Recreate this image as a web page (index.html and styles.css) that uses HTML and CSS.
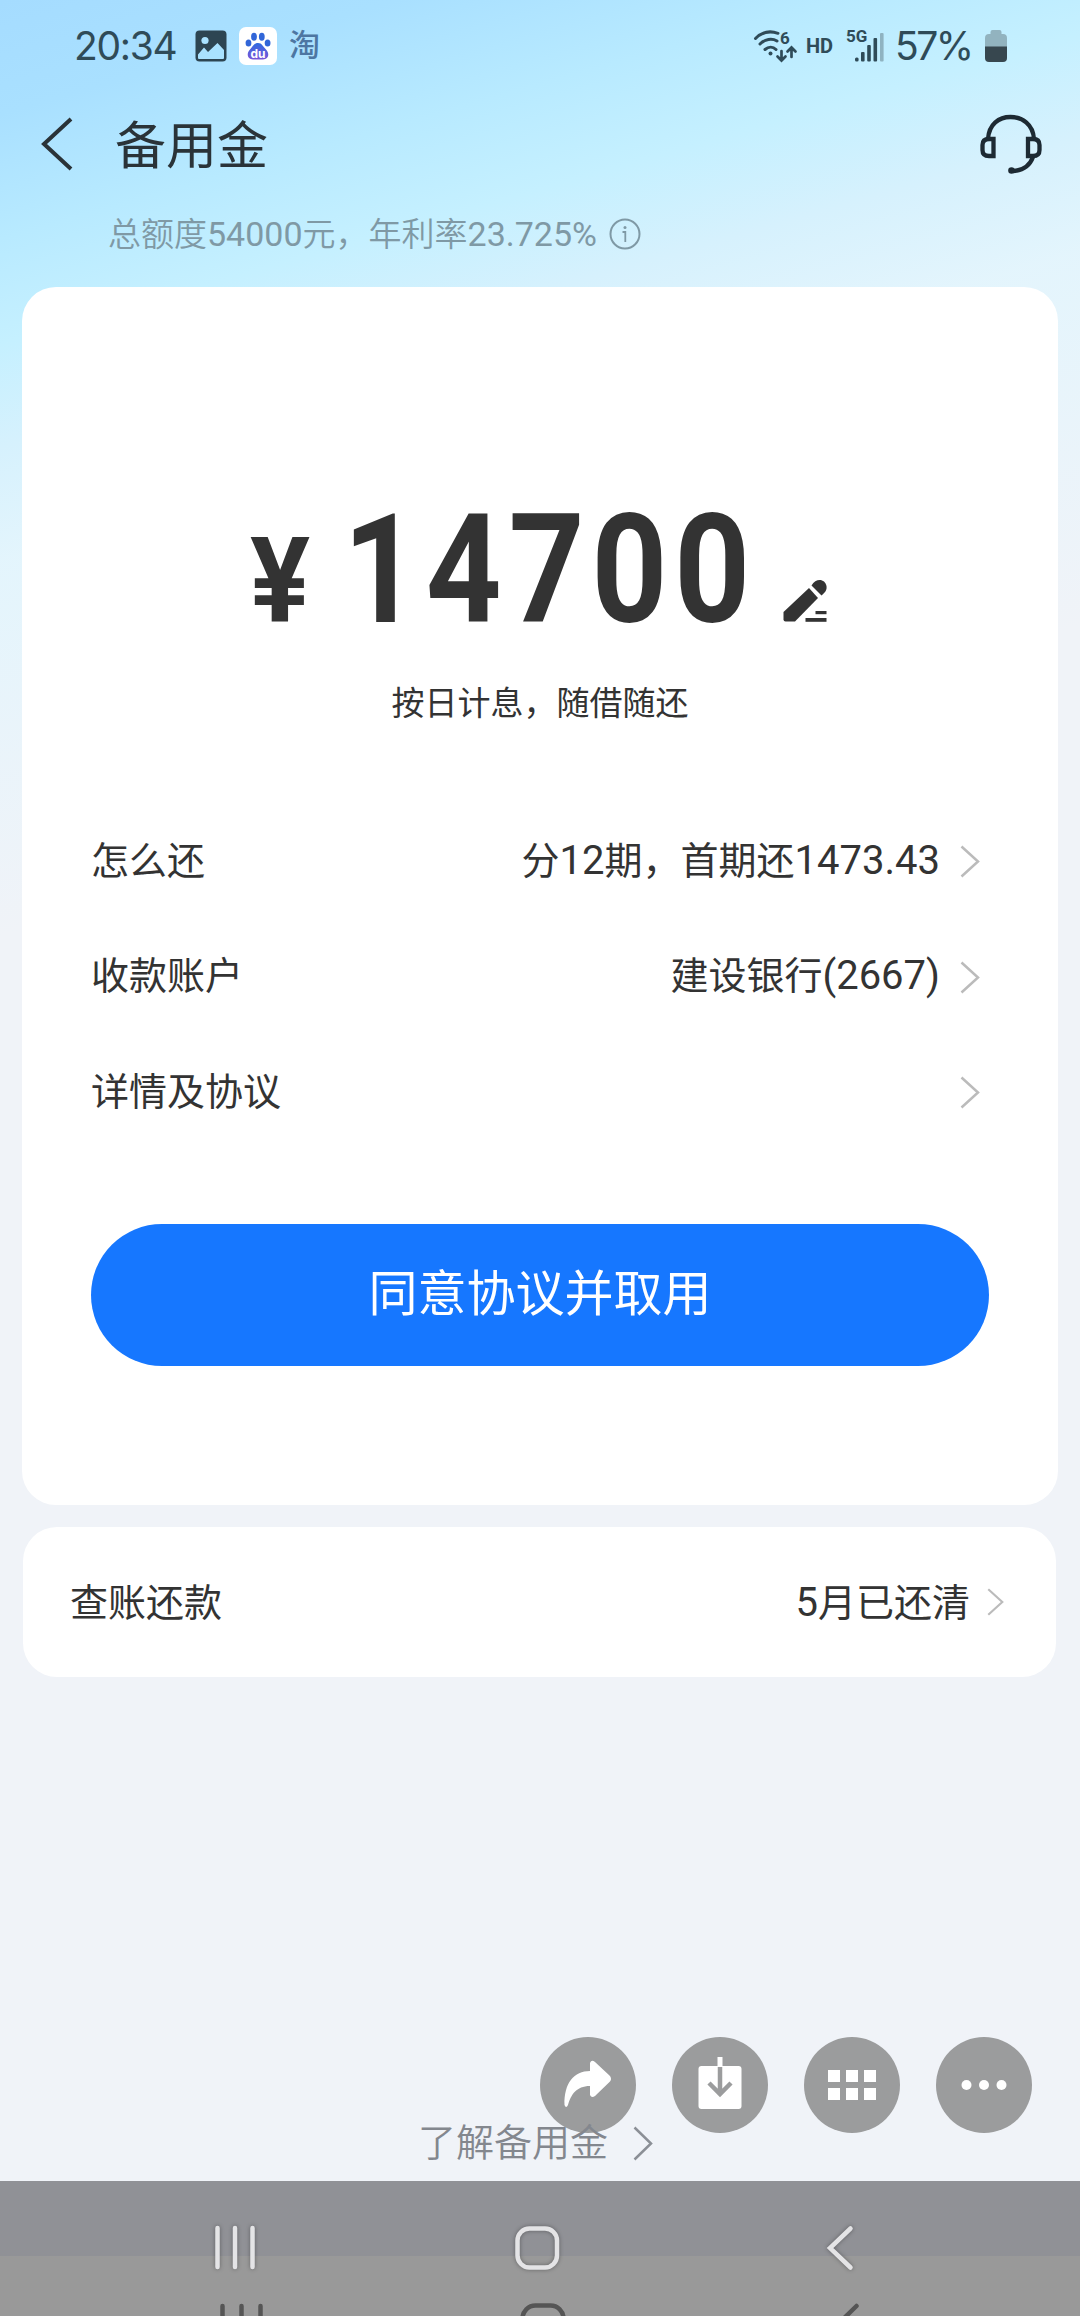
FILE: index.html
```html
<!DOCTYPE html>
<html lang="zh-CN">
<head>
<meta charset="utf-8">
<title>备用金</title>
<link rel="stylesheet" href="styles.css">
</head>
<body>
<div class="screen">
  <header class="status">
    <span class="time">20:34</span>
    <svg class="ic-photo" viewBox="0 0 32 32"><rect x=".5" y=".5" width="31" height="31" rx="4" fill="#2d4552"/><circle cx="10" cy="10.500" r="3.600" fill="#a9e2ff"/><path d="M3 24.500 9 17.500l4 4.500L22.500 13 29 20v8a1 1 0 0 1-1 1H4a1 1 0 0 1-1-1z" fill="#a9e2ff"/></svg>
    <svg class="ic-paw" viewBox="0 0 38 38"><rect width="38" height="38" rx="7" fill="#fff"/><defs><linearGradient id="paw" x1="0" y1="0" x2="0" y2="1"><stop offset="0" stop-color="#2f6be0"/><stop offset="1" stop-color="#7a55d8"/></linearGradient></defs><g fill="#3166d8"><ellipse cx="9.500" cy="16" rx="2.900" ry="3.600"/><ellipse cx="15" cy="9.700" rx="2.900" ry="4"/><ellipse cx="22.800" cy="9.700" rx="2.900" ry="4"/><ellipse cx="28.600" cy="16" rx="2.900" ry="3.600"/></g><path d="M19 16c4 0 5 3.500 8 6.500 4 4 2.500 10-3 10H14c-5.500 0-7-6-3-10 3-3 4-6.500 8-6.500z" fill="url(#paw)"/><text x="19" y="30.500" text-anchor="middle" class="paw-text">du</text></svg>
    <span class="tao">淘</span>
    <span class="spacer"></span>
    <svg class="ic-wifi" viewBox="0 0 42 32"><g fill="none" stroke="#2f4b58" stroke-width="3" stroke-linecap="round"><path d="M1.500 8.500C8 2 16 .5 24 3.300M6 14c5-5 12-6 17-3M11 19.500c3.500-3 8-3 11 0"/><path d="M27.500 21v9m-4-3.500 4 4 4-4M37.500 27v-9m-4 3.500 4-4 4 4" stroke-width="2.700"/></g><circle cx="16.500" cy="23.500" r="2" fill="#2f4b58"/><text x="26" y="13.500" class="wifi-text">6</text></svg>
    <span class="hd">HD</span>
    <svg class="ic-signal" viewBox="0 0 38 34"><text x="0" y="13.300" class="sig-text">5G</text><g fill="#2f4b58"><rect x="9" y="28.500" width="3.600" height="4" rx="1.500"/><rect x="15" y="23" width="3.600" height="9.500" rx="1"/><rect x="21.200" y="16" width="3.600" height="16.500" rx="1"/><rect x="27.500" y="9" width="3.600" height="23.500" rx="1"/><rect x="34" y="4" width="3.600" height="28.500" rx="1" fill="#8fb3c1"/></g></svg>
    <span class="pct">57%</span>
    <svg class="ic-batt" viewBox="0 0 22 32"><path d="M5.500 4V2a2 2 0 0 1 2-2h7a2 2 0 0 1 2 2v2H18a4 4 0 0 1 4 4v9H0V8a4 4 0 0 1 4-4z" fill="#92b3bf"/><path d="M0 16.500h22V28a4 4 0 0 1-4 4H4a4 4 0 0 1-4-4z" fill="#37474f"/></svg>
  </header>

  <nav class="titlebar">
    <svg class="ic-back" viewBox="0 0 32 54"><path d="M30 2 3 27l27 25" fill="none" stroke="#2a3338" stroke-width="4"/></svg>
    <h1>备用金</h1>
    <svg class="ic-headset" viewBox="0 0 62 60"><g fill="none" stroke="#1d2a33" stroke-width="4.300"><path d="M8 25C9 10 19 3 30.500 3S53 10 54 25"/><path d="M13.500 25v17H9q-6.500 0-6.500-6v-5q0-6 6.500-6zM48 25v17h5q6.500 0 6.500-6v-5q0-6-6.500-6z"/><path d="M53 43C50 51 43 56.500 33 57"/></g><circle cx="31.500" cy="56.500" r="3.300" fill="#1d2a33"/></svg>
  </nav>

  <p class="quota"><span>总额度<b>54000</b>元，年利率<b>23.725%</b></span><svg viewBox="0 0 32 32"><circle cx="16" cy="16" r="14.500" fill="none" stroke="#7f99a5" stroke-width="2"/><circle cx="16" cy="9.500" r="1.500" fill="#7f99a5"/><path d="M13.500 14h2.800v10" fill="none" stroke="#7f99a5" stroke-width="1.800"/></svg></p>

  <main class="card loan">
    <div class="amount">
      <span class="yen">¥</span>
      <span class="digits">14700</span>
      <svg class="ic-edit" viewBox="0 0 44 43"><g fill="#333"><path d="M26 9 35 19 12 42.500H2.500Q.5 42.500.5 40.500V33z"/><path d="M28.500 6.500C33-1.500 42-.5 43.500 7c.5 4-1 6-5 9.500z"/><rect x="32.500" y="32" width="11" height="3.200"/><rect x="22.500" y="39" width="21" height="3.800"/></g></svg>
    </div>
    <p class="caption">按日计息，随借随还</p>
    <ul class="rows">
      <li><span>怎么还</span><span class="value">分<b>12</b>期，首期还<b>1473.43</b></span><svg class="chev" viewBox="0 0 20 33"><path d="M1.500 1.500 18 16.500 1.500 31.500"/></svg></li>
      <li><span>收款账户</span><span class="value">建设银行<b>(2667)</b></span><svg class="chev" viewBox="0 0 20 33"><path d="M1.500 1.500 18 16.500 1.500 31.500"/></svg></li>
      <li><span>详情及协议</span><span class="value"></span><svg class="chev" viewBox="0 0 20 33"><path d="M1.500 1.500 18 16.500 1.500 31.500"/></svg></li>
    </ul>
    <button class="submit">同意协议并取用</button>
  </main>

  <section class="card bill">
    <span>查账还款</span><span class="value"><b>5</b>月已还清</span><svg class="chev small" viewBox="0 0 20 33"><path d="M1.500 1.500 18 16.500 1.500 31.500"/></svg>
  </section>

  <div class="tools">
    <span class="tool"><svg viewBox="0 0 96 96"><path d="M50 26q1.500-4 5-1L70 39q2 3 0 5.500L55 59q-3.500 2.500-5-1V49C36 49 31 58 28 68q-2 4-3.500 0C24 46 34 34 50 34z" fill="#fff"/></svg></span>
    <span class="tool"><svg viewBox="0 0 96 96"><rect x="26.500" y="29" width="43" height="43" rx="3" fill="#fff"/><path d="M48 20v10" stroke="#fff" stroke-width="5"/><path d="M48 30v27M37 46l11 11 11-11" fill="none" stroke="#9b9c9d" stroke-width="4.500"/></svg></span>
    <span class="tool"><svg viewBox="0 0 96 96"><path d="M24 33h12v12H24zM42 33h12v12H42zM60 33h12v12H60zM24 51h12v12H24zM42 51h12v12H42zM60 51h12v12H60z" fill="#fff"/></svg></span>
    <span class="tool"><svg viewBox="0 0 96 96"><g fill="#fff"><circle cx="30.500" cy="48" r="5"/><circle cx="48" cy="48" r="5"/><circle cx="65.500" cy="48" r="5"/></g></svg></span>
  </div>

  <a class="learn"><span>了解备用金</span><svg viewBox="0 0 20 35"><path d="M1.500 1.500 18 17.500 1.500 33.500" fill="none" stroke="#8b8f96" stroke-width="2.500"/></svg></a>

  <footer class="navbar">
    <svg viewBox="0 0 1080 135">
      <g fill="none" stroke="#e4e4e6" stroke-linecap="round" stroke-width="4.500">
        <g class="glow"><path d="M217.500 47v39M235 47v39M252.500 47v39"/><rect x="517.500" y="47.500" width="39.500" height="39" rx="12"/><path d="M850.500 47.500 830 67l20.500 19.500"/></g>
        <g stroke="#555"><path d="M222.500 125v20M241.500 125v20M260.500 125v20"/><rect x="522.500" y="124.500" width="41" height="40" rx="13"/><path d="M856.500 125 836 145"/></g>
      </g>
    </svg>
  </footer>
</div>
</body>
</html>
```
FILE: styles.css
```css
* { box-sizing: border-box; margin: 0; padding: 0; }

body {
  width: 1080px;
  font-family: Roboto, "Noto Sans CJK SC", sans-serif;
  color: #333;
}

svg { display: block; flex: none; overflow: visible; }
b { font-weight: inherit; font-size: 40px; }
.spacer { flex: 1; }

.screen {
  width: 1080px;
  height: 2316px;
  display: flex;
  flex-direction: column;
  overflow: hidden;
  background:
    linear-gradient(164deg, #a5dcff 0, #a9e0ff 110px, #b8eaff 230px, #c5f0ff 330px, #d6f1fd 430px, rgba(226, 245, 253, .9) 540px, rgba(240, 243, 248, 0) 900px),
    #f0f3f8;
}

.status {
  height: 92px;
  padding: 0 73px 0 74px;
  display: flex;
  align-items: center;
  color: #2f4b58;
}
.time { width: 121px; font: 400 39px/92px Inter, sans-serif; letter-spacing: -1.3px; white-space: nowrap; }
.ic-photo { width: 32px; height: 32px; }
.ic-paw { width: 38px; height: 38px; margin-left: 12px; }
.paw-text { font: 700 12px Inter, sans-serif; fill: #fff; }
.tao { margin-left: 12px; font-size: 31px; line-height: 40px; font-weight: 500; color: #4d76a2; }
.ic-wifi { width: 42px; height: 32px; }
.wifi-text { font: 700 17px Roboto, sans-serif; fill: #2f4b58; }
.hd { margin-left: 10px; width: 40px; font: 700 20px/30px Roboto, sans-serif; }
.ic-signal { width: 38px; height: 34px; }
.sig-text { font: 700 17px Roboto, sans-serif; fill: #2f4b58; }
.pct { width: 101px; padding-left: 11px; font: 400 39px/92px Inter, sans-serif; letter-spacing: -2.5px; white-space: nowrap; }
.ic-batt { width: 22px; height: 32px; }

.titlebar {
  height: 104px;
  padding: 0 38px 0 41px;
  display: flex;
  align-items: center;
}
.ic-back { width: 32px; height: 54px; }
.titlebar h1 { margin-left: 42px; padding-top: 5px; flex: 1; font-size: 51px; line-height: 70px; font-weight: 400; color: #2a3338; }
.ic-headset { width: 62px; height: 60px; }

.quota {
  height: 91px;
  padding: 15px 0 0 108px;
  display: flex;
  gap: 12px;
  font-size: 33px;
  line-height: 46px;
  font-weight: 350;
  color: #7f99a5;
}
.quota b { font-size: 34px; font-weight: 400; }
.quota svg { width: 32px; height: 32px; margin-top: 7px; }

.card { background: #fff; border-radius: 34px; flex: none; }

.loan {
  width: 1036px;
  height: 1218px;
  margin-left: 22px;
  padding: 216px 69px 0;
}
.amount { height: 128px; padding-left: 159px; display: flex; align-items: flex-end; }
.amount span { line-height: 1; font-weight: 700; white-space: nowrap; transform-origin: 0 100%; }
.yen { width: 93px; font-size: 118px; transform: scaleX(.95); margin-bottom: -9px; }
.digits { width: 440px; font-size: 152px; letter-spacing: 8px; transform: scaleX(.87); margin-bottom: -15px; }
.ic-edit { width: 44px; height: 43px; margin-bottom: 9px; }
.caption { margin-top: 49px; text-align: center; font-size: 33px; line-height: 48px; font-weight: 400; }

.rows { list-style: none; margin-top: 75px; }
.rows li { height: 115.5px; display: flex; align-items: center; font-size: 38px; line-height: 54px; }
.value { flex: 1; text-align: right; }
.chev { width: 20px; height: 33px; margin: 2px 9px 0 20px; fill: none; stroke: #bbb; stroke-width: 2.500; }
.submit {
  display: block;
  width: 898px;
  height: 142px;
  margin-top: 74px;
  border: 0;
  border-radius: 71px;
  background: #1677ff;
  color: #fff;
  font: 400 49px/142px Roboto, "Noto Sans CJK SC", sans-serif;
}

.bill {
  width: 1033px;
  height: 150px;
  margin: 22px 0 0 23px;
  padding: 0 52px 6px 47px;
  display: flex;
  align-items: center;
  font-size: 38px;
}
.chev.small { width: 17px; height: 30px; margin: 6px 0 0 17px; }

.tools { height: 96px; margin: 360px 48px 0 0; display: flex; justify-content: flex-end; gap: 36px; flex: none; }
.tool { width: 96px; height: 96px; border-radius: 50%; background: #9b9c9d; }

.learn {
  height: 48px;
  padding-left: 418px;
  display: flex;
  align-items: center;
  gap: 25px;
  margin-top: -14px;
  z-index: 1;
  font-size: 38px;
  line-height: 48px;
  font-weight: 350;
  color: #83878e;
}
.learn svg { width: 20px; height: 35px; }

.navbar { margin-top: auto; height: 135px; flex: none; background: linear-gradient(#909196 75px, #999 75px); }
.navbar svg { width: 1080px; height: 135px; }
.glow { filter: drop-shadow(0 0 2px rgba(0, 0, 0, .35)); }
```
